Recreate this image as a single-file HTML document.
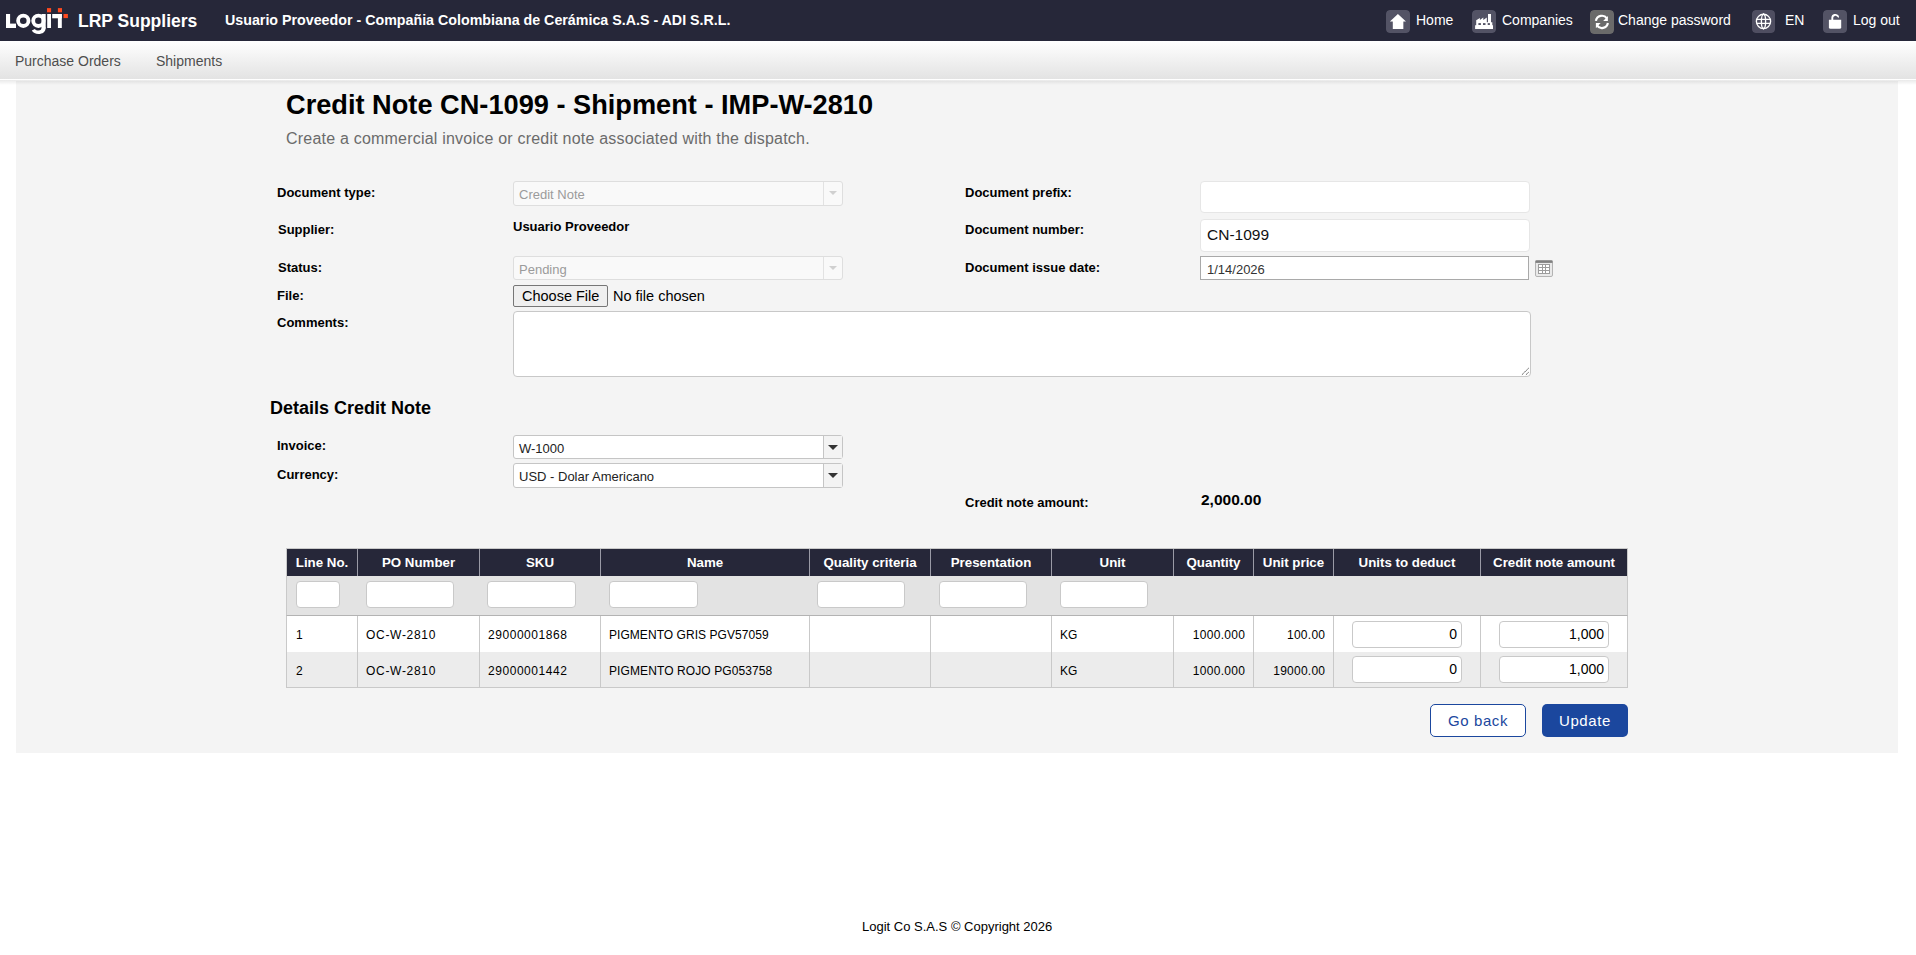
<!DOCTYPE html>
<html><head><meta charset="utf-8">
<style>
*{box-sizing:border-box;}
html,body{margin:0;padding:0;background:#fff;width:1916px;height:955px;overflow:hidden;font-family:"Liberation Sans",sans-serif;}
.a{position:absolute;white-space:nowrap;line-height:1.15;}
#hdr{position:absolute;left:0;top:0;width:1916px;height:41px;background:#262739;}
#nav{position:absolute;left:0;top:41px;width:1916px;height:37.5px;background:linear-gradient(#ffffff,#f2f2f2 45%,#e3e3e3);}
#navline{position:absolute;left:0;top:78.5px;width:1916px;height:1.5px;background:#fff;}
#navsh{position:absolute;left:0;top:80px;width:1916px;height:5px;background:linear-gradient(rgba(0,0,0,0.085),rgba(0,0,0,0));}
#content{position:absolute;left:16px;top:81px;width:1882px;height:672px;background:#f4f4f4;}
.wt{color:#fff;}
.ibox{position:absolute;top:10px;width:24px;height:23px;border-radius:4px;background:#535365;}
.htx{font-size:14px;color:#fff;top:12px;}
.lbl{font-weight:bold;font-size:13px;color:#000;}
.sel{position:absolute;width:330px;border:1px solid #dedede;border-radius:3px;background:#f9f9f9;font-size:13px;color:#9b9b9b;}
.sel .arr{position:absolute;right:0;top:0;width:19px;height:100%;border-left:1px solid #e2e2e2;}
.sel .t{position:absolute;left:5px;top:6px;line-height:1.15;}
.tri{position:absolute;left:5px;top:9px;width:0;height:0;border-left:4px solid transparent;border-right:4px solid transparent;border-top:4px solid #d0d0d0;}
.sel.en{background:#fff;border-color:#c5c5c5;color:#222;}
.sel.en .arr{background:#f3f3f3;border-left-color:#c5c5c5;}
.sel.en .tri{border-top-color:#333;border-left-width:5px;border-right-width:5px;border-top-width:5px;left:4px;}
.inp{position:absolute;background:#fff;border:1px solid #e6e6e6;border-radius:4px;}
.th{position:absolute;top:549px;height:27px;color:#fff;font-weight:bold;font-size:13.3px;text-align:center;line-height:27px;padding-left:1px;}
.td{position:absolute;font-size:12px;color:#000;line-height:14px;}
.fin{position:absolute;top:581px;height:27px;background:#fff;border:1px solid #c9c9c9;border-radius:4px;}
.vl{position:absolute;width:1px;background:#c9c9c9;}
</style></head>
<body>
<div id="hdr">
  <svg style="position:absolute;left:0;top:0" width="72" height="41" viewBox="0 0 72 41">
    <g fill="#fff">
      <rect x="6" y="14" width="4.1" height="14"/>
      <rect x="6" y="23.6" width="10" height="4.4"/>
      <circle cx="23.3" cy="20.8" r="5.2" fill="none" stroke="#fff" stroke-width="3.8"/>
      <circle cx="38.4" cy="20.8" r="5.2" fill="none" stroke="#fff" stroke-width="3.8"/>
      <rect x="41.6" y="14" width="4.1" height="14.5"/>
      <path d="M45.7 27.5 C45.7 32 42.5 34 38.5 34 C35.5 34 33 32.6 31.8 30.6 L34.9 28.9 C35.6 30 36.9 30.5 38.5 30.5 C40.7 30.5 41.6 29.3 41.6 27.5 Z"/>
      <rect x="47.2" y="14" width="3.8" height="14"/>
      <rect x="52.2" y="14" width="9.6" height="4.3"/>
      <rect x="57.9" y="14" width="3.9" height="14"/>
    </g>
    <g fill="#ff4a1f">
      <rect x="47" y="8.1" width="4.1" height="4.2"/>
      <rect x="57.9" y="8.1" width="4.1" height="4.2"/>
      <rect x="63.5" y="14" width="4.4" height="4.1"/>
    </g>
  </svg>
  <div class="a wt" style="left:78px;top:11px;font-size:17.5px;font-weight:bold;">LRP Suppliers</div>
  <div class="a wt" style="left:225px;top:12px;font-size:14.25px;font-weight:bold;">Usuario Proveedor - Compañia Colombiana de Cerámica S.A.S - ADI S.R.L.</div>

  <svg class="ibox" style="left:1386px;top:10px;background:none;width:24px;height:23px" width="24" height="23" viewBox="0 0 24 23">
    <rect x="0" y="0" width="24" height="23" rx="3.5" fill="#535365"/>
    <path d="M11.9 3.9 L20 11.6 L17.35 11.6 L17.35 19 L6.8 19 L6.8 11.6 L3.9 11.6 Z" fill="#fff"/>
  </svg>
  <div class="a htx" style="left:1416px">Home</div>
  <svg class="ibox" style="left:1472px;top:10px;background:none;width:24px;height:23px" width="24" height="23" viewBox="0 0 24 23">
    <rect x="0" y="0" width="24" height="23" rx="3.5" fill="#535365"/>
    <path d="M3.1 19 L3.1 15.3 L4.2 15.3 L4.2 10.3 L7.9 8 L7.9 10 L11.3 7.6 L11.3 10 L14.8 7.4 L14.8 12.2 L16 12.2 L16 3.9 L19 3.9 L19 12.2 L20.3 12.2 L20.3 15.3 L21 15.3 L21 19 Z" fill="#fff"/>
    <g fill="#535365"><rect x="6.4" y="13.1" width="2.5" height="1.9"/><rect x="11" y="13.1" width="2.5" height="1.9"/><rect x="15.7" y="13.1" width="2.2" height="1.9"/></g>
  </svg>
  <div class="a htx" style="left:1502px">Companies</div>
  <svg class="ibox" style="left:1590px;top:10px;background:none;width:24px;height:24px" width="24" height="24" viewBox="0 0 24 24">
    <rect x="0" y="0" width="24" height="24" rx="4" fill="#6a6a6a"/>
    <path d="M5.9 10.84 A6.1 6.1 0 0 1 16.9 8.4" fill="none" stroke="#fff" stroke-width="2.2"/>
    <path d="M17.9 5.9 L17.9 10.9 L13.2 10.9 Z" fill="#fff"/>
    <path d="M17.9 12.96 A6.1 6.1 0 0 1 6.9 15.4" fill="none" stroke="#fff" stroke-width="2.2"/>
    <path d="M5.9 13 L5.9 18.2 L10.6 13 Z" fill="#fff"/>
  </svg>
  <div class="a htx" style="left:1618px">Change password</div>
  <svg class="ibox" style="left:1752px;top:10px;background:none;width:23px;height:23px" width="23" height="23" viewBox="0 0 23 23">
    <rect x="0" y="0" width="23" height="23" rx="3.5" fill="#4f4e61"/>
    <g fill="none" stroke="#fff" stroke-width="1.35">
      <circle cx="11.5" cy="11.4" r="7.1"/>
      <ellipse cx="11.5" cy="11.4" rx="2.1" ry="7.1"/>
      <line x1="5" y1="9.3" x2="18" y2="9.3"/>
      <line x1="5" y1="13.4" x2="18" y2="13.4"/>
    </g>
    <rect x="10.9" y="3.3" width="1.2" height="1.5" fill="#fff"/>
    <rect x="10.9" y="18" width="1.2" height="1.5" fill="#fff"/>
  </svg>
  <div class="a htx" style="left:1785px">EN</div>
  <svg class="ibox" style="left:1823px;top:10px;background:none;width:24px;height:23px" width="24" height="23" viewBox="0 0 24 23">
    <rect x="0" y="0" width="24" height="23" rx="3.5" fill="#535365"/>
    <path d="M5.9 9.7 L18.2 9.7 L18.2 17.6 Q18.2 18.8 16.5 18.8 L7.6 18.8 Q5.9 18.8 5.9 17.6 Z" fill="#fff"/>
    <path d="M9.3 10 L9.3 7.85 A3 3 0 0 1 14.9 6.4" fill="none" stroke="#fff" stroke-width="1.9"/>
    <path d="M13.9 6.6 L15.8 7.9 L15.9 5.6 Z" fill="#fff"/>
  </svg>
  <div class="a htx" style="left:1853px">Log out</div>
</div>
<div id="nav">
  <div class="a" style="left:15px;top:11.5px;font-size:14px;color:#4e4e4e;">Purchase Orders</div>
  <div class="a" style="left:156px;top:11.5px;font-size:14px;color:#4e4e4e;">Shipments</div>
</div>
<div id="navline"></div>
<div id="content"></div>
<div id="navsh"></div>

<!-- title -->
<div class="a" style="left:286px;top:89px;font-size:27.2px;font-weight:bold;color:#000;">Credit Note CN-1099 - Shipment - IMP-W-2810</div>
<div class="a" style="left:286px;top:130px;font-size:16px;color:#6b6b6b;letter-spacing:0.21px;">Create a commercial invoice or credit note associated with the dispatch.</div>

<!-- form left -->
<div class="a lbl" style="left:277px;top:186px">Document type:</div>
<div class="sel" style="left:513px;top:181px;height:25px"><span class="t">Credit Note</span><div class="arr"><div class="tri"></div></div></div>
<div class="a lbl" style="left:278px;top:223px">Supplier:</div>
<div class="a lbl" style="left:513px;top:220px">Usuario Proveedor</div>
<div class="a lbl" style="left:278px;top:261px">Status:</div>
<div class="sel" style="left:513px;top:256px;height:24px"><span class="t">Pending</span><div class="arr"><div class="tri"></div></div></div>
<div class="a lbl" style="left:277px;top:289px">File:</div>
<div class="a" style="left:513px;top:285px;width:95px;height:22px;border:1px solid #767676;border-radius:2px;background:#efefef;"></div>
<div class="a" style="left:522px;top:287.5px;font-size:14.5px;color:#000;">Choose File</div>
<div class="a" style="left:613px;top:287.5px;font-size:14.5px;color:#000;">No file chosen</div>
<div class="a lbl" style="left:277px;top:316px">Comments:</div>
<div class="a" style="left:513px;top:311px;width:1018px;height:66px;background:#fff;border:1px solid #c8c8c8;border-radius:4px;"></div>
<svg style="position:absolute;left:1520px;top:366px" width="11" height="11" viewBox="0 0 11 11"><g stroke="#666" stroke-width="1" stroke-linecap="round" stroke-dasharray="1 1"><line x1="2.2" y1="8.5" x2="8.5" y2="2.3"/><line x1="6.2" y1="8.5" x2="8.5" y2="6.4"/></g></svg>

<!-- form right -->
<div class="a lbl" style="left:965px;top:186px">Document prefix:</div>
<div class="inp" style="left:1200px;top:181px;width:330px;height:32px"></div>
<div class="a lbl" style="left:965px;top:223px">Document number:</div>
<div class="inp" style="left:1200px;top:219px;width:330px;height:33px"></div>
<div class="a" style="left:1207px;top:226px;font-size:15.5px;color:#111;">CN-1099</div>
<div class="a lbl" style="left:965px;top:261px">Document issue date:</div>
<div class="a" style="left:1200px;top:256px;width:329px;height:24px;background:#fff;border:1px solid #a9a9a9;"></div>
<div class="a" style="left:1207px;top:263px;font-size:13px;color:#333;">1/14/2026</div>
<svg style="position:absolute;left:1535px;top:260px" width="18" height="17" viewBox="0 0 18 17">
  <rect x="0.5" y="0.5" width="17" height="16" rx="1.5" fill="#e9e9e9" stroke="#b3b3b3"/>
  <rect x="0.5" y="0.5" width="17" height="2.4" fill="#808080"/>
  <rect x="3" y="4" width="12" height="10" fill="#fff"/>
  <g stroke="#9c9c9c" stroke-width="1" fill="none">
    <line x1="3.5" y1="4" x2="3.5" y2="14"/><line x1="7.5" y1="4" x2="7.5" y2="14"/><line x1="10.5" y1="4" x2="10.5" y2="14"/><line x1="14.5" y1="4" x2="14.5" y2="14"/>
    <line x1="3" y1="4.5" x2="15" y2="4.5"/><line x1="3" y1="7.5" x2="15" y2="7.5"/><line x1="3" y1="10.5" x2="15" y2="10.5"/><line x1="3" y1="13.5" x2="15" y2="13.5"/>
  </g>
</svg>

<!-- details -->
<div class="a" style="left:270px;top:398px;font-size:18px;font-weight:bold;color:#000;">Details Credit Note</div>
<div class="a lbl" style="left:277px;top:439px">Invoice:</div>
<div class="sel en" style="left:513px;top:435px;height:24px"><span class="t">W-1000</span><div class="arr"><div class="tri"></div></div></div>
<div class="a lbl" style="left:277px;top:468px">Currency:</div>
<div class="sel en" style="left:513px;top:463px;height:25px"><span class="t">USD - Dolar Americano</span><div class="arr"><div class="tri"></div></div></div>
<div class="a lbl" style="left:965px;top:496px">Credit note amount:</div>
<div class="a" style="left:1201px;top:491px;font-size:15.5px;font-weight:bold;color:#000;">2,000.00</div>

<!-- table -->
<div class="a" style="left:286px;top:548px;width:1342px;height:28px;background:#262739;border:1px solid #c9c9c9;border-bottom:none;"></div>
<div class="a" style="left:286px;top:576px;width:1342px;height:40px;background:#e3e3e3;border-left:1px solid #c9c9c9;border-right:1px solid #c9c9c9;border-bottom:1px solid #b3b3b3;"></div>
<div class="a" style="left:286px;top:616px;width:1342px;height:36px;background:#fff;border-left:1px solid #c9c9c9;border-right:1px solid #c9c9c9;"></div>
<div class="a" style="left:286px;top:652px;width:1342px;height:36px;background:#ececec;border:1px solid #c9c9c9;border-top:none;"></div>

<div class="vl" style="left:357px;top:549px;height:27px;background:#9a9aa6"></div>
<div class="vl" style="left:357px;top:616px;height:72px"></div>
<div class="vl" style="left:479px;top:549px;height:27px;background:#9a9aa6"></div>
<div class="vl" style="left:479px;top:616px;height:72px"></div>
<div class="vl" style="left:600px;top:549px;height:27px;background:#9a9aa6"></div>
<div class="vl" style="left:600px;top:616px;height:72px"></div>
<div class="vl" style="left:809px;top:549px;height:27px;background:#9a9aa6"></div>
<div class="vl" style="left:809px;top:616px;height:72px"></div>
<div class="vl" style="left:930px;top:549px;height:27px;background:#9a9aa6"></div>
<div class="vl" style="left:930px;top:616px;height:72px"></div>
<div class="vl" style="left:1051px;top:549px;height:27px;background:#9a9aa6"></div>
<div class="vl" style="left:1051px;top:616px;height:72px"></div>
<div class="vl" style="left:1173px;top:549px;height:27px;background:#9a9aa6"></div>
<div class="vl" style="left:1173px;top:616px;height:72px"></div>
<div class="vl" style="left:1253px;top:549px;height:27px;background:#9a9aa6"></div>
<div class="vl" style="left:1253px;top:616px;height:72px"></div>
<div class="vl" style="left:1333px;top:549px;height:27px;background:#9a9aa6"></div>
<div class="vl" style="left:1333px;top:616px;height:72px"></div>
<div class="vl" style="left:1480px;top:549px;height:27px;background:#9a9aa6"></div>
<div class="vl" style="left:1480px;top:616px;height:72px"></div>
<div class="th" style="left:286px;width:71px">Line No.</div>
<div class="th" style="left:357px;width:122px">PO Number</div>
<div class="th" style="left:479px;width:121px">SKU</div>
<div class="th" style="left:600px;width:209px">Name</div>
<div class="th" style="left:809px;width:121px">Quality criteria</div>
<div class="th" style="left:930px;width:121px">Presentation</div>
<div class="th" style="left:1051px;width:122px">Unit</div>
<div class="th" style="left:1173px;width:80px">Quantity</div>
<div class="th" style="left:1253px;width:80px">Unit price</div>
<div class="th" style="left:1333px;width:147px">Units to deduct</div>
<div class="th" style="left:1480px;width:147px">Credit note amount</div>
<div class="fin" style="left:296px;width:44px"></div>
<div class="fin" style="left:366px;width:88px"></div>
<div class="fin" style="left:487px;width:89px"></div>
<div class="fin" style="left:609px;width:89px"></div>
<div class="fin" style="left:817px;width:88px"></div>
<div class="fin" style="left:939px;width:88px"></div>
<div class="fin" style="left:1060px;width:88px"></div>
<div class="td" style="left:296px;top:628px;">1</div>
<div class="td" style="left:366px;top:628px;letter-spacing:0.7px;">OC-W-2810</div>
<div class="td" style="left:488px;top:628px;letter-spacing:0.55px;">29000001868</div>
<div class="td" style="left:609px;top:628px;letter-spacing:0.05px;">PIGMENTO GRIS PGV57059</div>
<div class="td" style="left:1060px;top:628px;">KG</div>
<div class="td" style="left:1173px;width:72.30px;text-align:right;top:628px;letter-spacing:0.3px;">1000.000</div>
<div class="td" style="left:1253px;width:72.26px;text-align:right;top:628px;letter-spacing:0.26px;">100.00</div>
<div class="fin" style="left:1352px;width:110px;top:621px;height:27px"></div>
<div class="td" style="left:1352px;width:105px;text-align:right;top:626px;font-size:14px;line-height:16px">0</div>
<div class="fin" style="left:1499px;width:110px;top:621px;height:27px"></div>
<div class="td" style="left:1499px;width:105px;text-align:right;top:626px;font-size:14px;line-height:16px">1,000</div>
<div class="td" style="left:296px;top:664px;">2</div>
<div class="td" style="left:366px;top:664px;letter-spacing:0.7px;">OC-W-2810</div>
<div class="td" style="left:488px;top:664px;letter-spacing:0.55px;">29000001442</div>
<div class="td" style="left:609px;top:664px;letter-spacing:0.1px;">PIGMENTO ROJO PG053758</div>
<div class="td" style="left:1060px;top:664px;">KG</div>
<div class="td" style="left:1173px;width:72.30px;text-align:right;top:664px;letter-spacing:0.3px;">1000.000</div>
<div class="td" style="left:1253px;width:72.24px;text-align:right;top:664px;letter-spacing:0.24px;">19000.00</div>
<div class="fin" style="left:1352px;width:110px;top:656px;height:27px"></div>
<div class="td" style="left:1352px;width:105px;text-align:right;top:661px;font-size:14px;line-height:16px">0</div>
<div class="fin" style="left:1499px;width:110px;top:656px;height:27px"></div>
<div class="td" style="left:1499px;width:105px;text-align:right;top:661px;font-size:14px;line-height:16px">1,000</div>


<div class="a" style="left:1430px;top:704px;width:96px;height:33px;border:1px solid #1b479e;border-radius:5px;background:#fff;"></div>
<div class="a" style="left:1448px;top:712px;font-size:15px;letter-spacing:0.6px;color:#1b479e;">Go back</div>
<div class="a" style="left:1542px;top:704px;width:86px;height:33px;border-radius:5px;background:#1b479e;"></div>
<div class="a" style="left:1559px;top:712px;font-size:15px;letter-spacing:0.6px;color:#fff;">Update</div>

<div class="a" style="left:862px;top:920px;font-size:13px;color:#000;">Logit Co S.A.S © Copyright 2026</div>
</body></html>
